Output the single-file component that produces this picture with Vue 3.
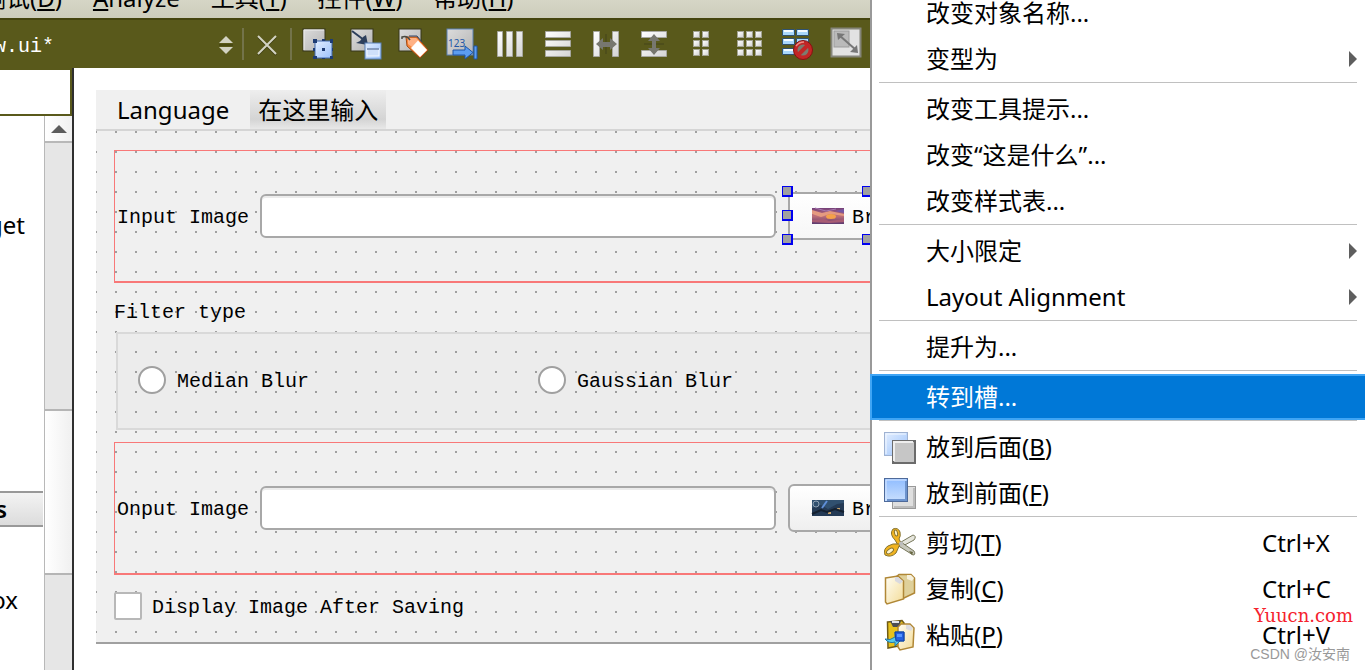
<script setup>
import { ref } from 'vue'

const menus = [
  { pre: '测试(', key: 'D', post: ')' },
  { pre: '', key: 'A', post: 'nalyze' },
  { pre: '工具(', key: 'T', post: ')' },
  { pre: '控件(', key: 'W', post: ')' },
  { pre: '帮助(', key: 'H', post: ')' },
]

const sections = [
  [{ text: '改变对象名称...' }, { text: '变型为', sub: true }],
  [{ text: '改变工具提示...' }, { text: '改变“这是什么”...' }, { text: '改变样式表...' }],
  [{ text: '大小限定', sub: true }, { text: 'Layout Alignment', sub: true }],
  [{ text: '提升为...' }],
  [{ text: '转到槽...', active: true }],
  [
    { text: '放到后面', key: 'B', icon: 'back' },
    { text: '放到前面', key: 'F', icon: 'front' },
  ],
  [
    { text: '剪切', key: 'T', icon: 'cut', shortcut: 'Ctrl+X' },
    { text: '复制', key: 'C', icon: 'copy', shortcut: 'Ctrl+C' },
    { text: '粘贴', key: 'P', icon: 'paste', shortcut: 'Ctrl+V' },
  ],
]

const grid3 = [3, 12, 21]
const grid2 = [7, 16]

const inputPath = ref('')
const outputPath = ref('')
const blur = ref('')
const showAfter = ref(false)
</script>

<template>
  <div class="designer">
    <svg class="defs" aria-hidden="true">
      <defs>
        <linearGradient id="gGray" x1="0" y1="0" x2="1" y2="1">
          <stop offset="0" stop-color="#dcdcdc" /><stop offset="1" stop-color="#b4b4b4" />
        </linearGradient>
        <linearGradient id="gLight" x1="0" y1="0" x2="1" y2="1">
          <stop offset="0" stop-color="#ffffff" /><stop offset="1" stop-color="#d4d4d4" />
        </linearGradient>
        <linearGradient id="gBlue" x1="0" y1="0" x2="1" y2="1">
          <stop offset="0" stop-color="#e2eeff" /><stop offset="1" stop-color="#9cc2fb" />
        </linearGradient>
        <linearGradient id="gBlue2" x1="0" y1="0" x2="0" y2="1">
          <stop offset="0" stop-color="#8fbcff" /><stop offset="1" stop-color="#c9dffd" />
        </linearGradient>
        <linearGradient id="gPage" x1="0" y1="0" x2="1" y2="1">
          <stop offset="0" stop-color="#fffdf4" /><stop offset="1" stop-color="#f3dc98" />
        </linearGradient>
        <linearGradient id="gDusk" x1="0" y1="0" x2="0" y2="1">
          <stop offset="0" stop-color="#74407a" /><stop offset="0.5" stop-color="#c07078" /><stop offset="1" stop-color="#5c3a70" />
        </linearGradient>
      </defs>
    </svg>

    <nav class="menubar">
      <button v-for="m in menus" :key="m.key" type="button" class="menu-title">{{ m.pre }}<u>{{ m.key }}</u>{{ m.post }}</button>
    </nav>

    <div class="toolbar">
      <div class="file">
        <select aria-label="Open file"><option>window.ui*</option></select>
        <svg class="updown" width="14" height="20" viewBox="0 0 14 20">
          <path d="M0 9H14V11H0Z" fill="#41410f" opacity=".6" /><path d="M7 1 14 8H0Z" fill="#d3d3c3" /><path d="M0 12H14L7 19Z" fill="#d3d3c3" />
        </svg>
      </div>
      <span class="bar"></span>
      <button type="button" class="tool close" aria-label="Close">
        <svg width="20" height="20" viewBox="0 0 20 20"><path d="M1 3 19 21M19 3 1 21" stroke="#3c3c10" stroke-width="2" /><path d="M1 2 19 20M19 2 1 20" stroke="#d3d3c4" stroke-width="2" /></svg>
      </button>
      <span class="bar"></span>
      <div class="tools">
        <button type="button" class="tool" aria-label="Edit widgets">
          <svg viewBox="0 0 32 32">
            <rect x="1" y="1" width="22" height="22" fill="url(#gGray)" stroke="#37371c" /><path d="M2 22V2H22" fill="none" stroke="#eee" />
            <rect x="13" y="13" width="17" height="17" fill="url(#gBlue)" stroke="#3e69b0" />
            <path d="M11 11h4v4h-4zM28 11h3v4h-3zM11 28h4v3h-4zM28 28h3v3h-3zM20 20h3v3h-3z" fill="#1e3c74" /><path d="M20 11h3v2h-3zM11 20h2v3h-2zM30 20h1v3h-1zM20 30h3v1h-3z" fill="#1e3c74" />
          </svg>
        </button>
        <button type="button" class="tool" aria-label="Edit signals and slots">
          <svg viewBox="0 0 32 32">
            <rect x="1" y="1" width="22" height="22" fill="url(#gGray)" stroke="#37371c" />
            <path d="M2 3 14 12" stroke="#2d3f5c" stroke-width="2" /><path d="M16 7 18 17 6 15 10 13 13 9Z" fill="#2d3f5c" />
            <rect x="15" y="15" width="16" height="16" fill="url(#gBlue)" stroke="#5a82ba" /><rect x="17" y="21" width="12" height="7" fill="#cfe0fb" stroke="#f5f9ff" /><path d="M17 21H29" stroke="#2e4c7f" />
          </svg>
        </button>
        <button type="button" class="tool" aria-label="Edit buddies">
          <svg viewBox="0 0 32 32">
            <rect x="1" y="1" width="22" height="22" fill="url(#gGray)" stroke="#37371c" />
            <path d="M8 9H19L30 22 22 30 9 18Z" fill="#f9873a" stroke="#a44a16" /><path d="M10 10H18L21 13 14 19 10 16Z" fill="#ffb184" />
            <path d="M20 12.500 29 22 22 29 13 20Z" fill="#fff" /><path d="M4 11V9Q9 7 12 12" fill="none" stroke="#4a4a42" stroke-width="1.5" /><path d="M11 8H19L24 14" fill="none" stroke="#33476a" />
          </svg>
        </button>
        <button type="button" class="tool" aria-label="Edit tab order">
          <svg viewBox="0 0 32 32">
            <rect x="1" y="1" width="26" height="26" fill="url(#gGray)" stroke="#5a80b4" />
            <text x="2" y="19" class="digits">123</text>
            <path d="M7 22H19V18L27 24.500 19 31V27H7Z" fill="#5c9df0" stroke="#1f55a5" /><path d="M28 18h3v13h-3z" fill="#5c9df0" stroke="#1f55a5" />
          </svg>
        </button>
        <button type="button" class="tool" aria-label="Lay out horizontally">
          <svg viewBox="0 0 32 32"><g fill="url(#gLight)" stroke="#a7a7a0"><path d="M3.500 3.500h5v25h-5zM12.500 3.500h6v25h-6zM22.500 3.500h6v25h-6z" /></g></svg>
        </button>
        <button type="button" class="tool" aria-label="Lay out vertically">
          <svg viewBox="0 0 32 32"><g fill="url(#gLight)" stroke="#a7a7a0"><path d="M3.500 3.500h25v6h-25zM3.500 12.500h25v6h-25zM3.500 22.500h25v6h-25z" /></g></svg>
        </button>
        <button type="button" class="tool" aria-label="Horizontal splitter">
          <svg viewBox="0 0 32 32"><g fill="url(#gLight)" stroke="#a7a7a0"><path d="M3.500 3.500h6v25h-6zM22.500 3.500h6v25h-6z" /></g><path d="M16 6V26" stroke="#45451a" /><path d="M6 16 13 10V14H20V10L27 16 20 22V19H13V22Z" fill="#77776f" /></svg>
        </button>
        <button type="button" class="tool" aria-label="Vertical splitter">
          <svg viewBox="0 0 32 32"><g fill="url(#gLight)" stroke="#a7a7a0"><path d="M3.500 3.500h25v6h-25zM3.500 22.500h25v6h-25z" /></g><path d="M6 16H26" stroke="#45451a" /><path d="M16 6 22 13H18V20H22L16 27 10 20H14V13H10Z" fill="#77776f" /></svg>
        </button>
        <button type="button" class="tool" aria-label="Form layout">
          <svg viewBox="0 0 32 32">
            <template v-for="y in grid3" :key="y"><g v-for="x in grid2" :key="x"><rect :x="x" :y="y" width="7" height="7" fill="#a3a393" /><rect :x="x + 1" :y="y + 1" width="5" height="5" fill="url(#gLight)" /></g></template>
          </svg>
        </button>
        <button type="button" class="tool" aria-label="Grid layout">
          <svg viewBox="0 0 32 32">
            <template v-for="y in grid3" :key="y"><g v-for="x in grid3" :key="x"><rect :x="x" :y="y" width="7" height="7" fill="#a3a393" /><rect :x="x + 1" :y="y + 1" width="5" height="5" fill="url(#gLight)" /></g></template>
          </svg>
        </button>
        <button type="button" class="tool" aria-label="Break layout">
          <svg viewBox="0 0 32 32">
            <g fill="#a9d8fb" stroke="#2f5270"><path d="M.5 1.500h12v6H.5zM14.500 1.500h12v6h-12zM.5 10.500h12v6H.5zM14.500 10.500h12v6h-12zM.5 20.500h12v6H.5z" /></g>
            <path d="M2 3h9M16 3h9M2 12h9M2 22h9" stroke="#f4fbff" stroke-width="2" />
            <circle cx="21" cy="22" r="7.500" fill="#7c7c70" stroke="#c22626" stroke-width="4" /><circle cx="21" cy="22" r="9.500" fill="none" stroke="#861111" />
            <path d="M16 27 26 17" stroke="#c22626" stroke-width="4" /><path d="M14 18Q17 14 22 14" fill="none" stroke="#ee8c83" stroke-width="1.500" />
          </svg>
        </button>
        <button type="button" class="tool" aria-label="Adjust size">
          <svg viewBox="0 0 32 32">
            <rect x="1.500" y=".5" width="29" height="28" fill="#e2e2e2" stroke="#85857a" stroke-width="2" /><rect x="4" y="3" width="15" height="16" fill="#bababa" stroke="#9c9c9c" />
            <path d="M9 7 26 22" stroke="#777" stroke-width="2" /><path d="M7 5 15 6 8 12ZM28 25 20 24 27 17Z" fill="#777" />
          </svg>
        </button>
      </div>
    </div>

    <div class="workspace">
      <aside class="sidebar">
        <input class="filter" type="text" aria-label="Filter" />
        <div class="box">
          <div class="list">
            <div class="entry first">get</div>
            <div class="heading">s</div>
            <div class="entry">ox</div>
          </div>
          <div class="scroll">
            <button type="button" class="scroll-up" aria-label="Scroll up"><svg width="16" height="8" viewBox="0 0 16 8"><path d="M8 0 16 8H0Z" fill="#5c5c5c" /></svg></button>
            <div class="track"><div class="thumb"></div></div>
          </div>
        </div>
      </aside>

      <main class="canvas">
        <form class="form" @submit.prevent>
          <div class="form-menu">
            <button type="button">Language</button>
            <button type="button" class="placeholder">在这里输入</button>
          </div>
          <div class="form-body">
            <div class="row">
              <label for="in">Input Image</label>
              <input id="in" v-model="inputPath" type="text" />
              <div class="selected">
                <button type="button" class="browse square">
                  <svg width="32" height="16" viewBox="0 0 32 16">
                    <rect width="32" height="16" fill="url(#gDusk)" /><path d="M0 2 10 5 18 3 32 6V8L18 6 9 9 0 6Z" fill="#e49a80" /><path d="M3 0 14 3 24 1" fill="none" stroke="#a77ab2" /><ellipse cx="19" cy="8.500" rx="5" ry="2.500" fill="#f4a14a" /><path d="M0 12 12 11 17 13 32 11V14L17 15 0 14Z" fill="#a85c74" /><path d="M23 3 32 1V5Z" fill="#7656a3" />
                  </svg>
                  <span>Browse</span>
                </button>
                <i class="h tl"></i><i class="h tc"></i><i class="h tr"></i><i class="h ml"></i><i class="h mr"></i><i class="h bl"></i><i class="h bc"></i><i class="h br"></i>
              </div>
            </div>

            <fieldset>
              <legend>Filter type</legend>
              <div class="group">
                <label><input v-model="blur" type="radio" name="blur" value="median" /><span>Median Blur</span></label>
                <label><input v-model="blur" type="radio" name="blur" value="gaussian" /><span>Gaussian Blur</span></label>
              </div>
            </fieldset>

            <div class="row">
              <label for="out">Onput Image</label>
              <input id="out" v-model="outputPath" type="text" />
              <button type="button" class="browse">
                <svg width="32" height="16" viewBox="0 0 32 16">
                  <rect width="32" height="16" fill="#243a55" /><path d="M0 8 9 5 16 9 25 4 32 3V0H0Z" fill="#31506f" /><circle cx="4" cy="4" r="3" fill="none" stroke="#8fa1b4" /><path d="M10 8 15 1" stroke="#5f8fd8" stroke-width="2" /><path d="M16 12h3v2h-3zM25 8h3v2h-3z" fill="#c9a36b" /><path d="M0 14 9 10 15 12 23 9 32 12" fill="none" stroke="#14202f" stroke-width="2" />
                </svg>
                <span>Browse</span>
              </button>
            </div>

            <label class="check"><input v-model="showAfter" type="checkbox" /><span>Display Image After Saving</span></label>
          </div>
        </form>
      </main>
    </div>

    <ul class="context" role="menu">
      <template v-for="(section, i) in sections" :key="i">
        <li v-if="i" class="rule" role="separator"></li>
        <li v-for="item in section" :key="item.text" role="none">
          <button type="button" role="menuitem" class="item" :class="{ active: item.active }">
            <span class="icon">
              <svg v-if="item.icon === 'back'" viewBox="0 0 32 32">
                <rect x=".5" y="1.500" width="23" height="23" fill="url(#gBlue)" stroke="#9fb2d2" /><path d="M2 23V3H22" fill="none" stroke="#f3f8ff" />
                <rect x="9" y="10" width="22" height="22" fill="#c6c6c6" stroke="#6b6b6b" stroke-width="2" /><path d="M10 30V11H29" fill="none" stroke="#eee" stroke-width="2" />
              </svg>
              <svg v-else-if="item.icon === 'front'" viewBox="0 0 32 32">
                <rect x="8.500" y="9.500" width="23" height="22" fill="#dfdfdf" stroke="#999" /><path d="M30 11V30H10" fill="none" stroke="#bcbcbc" stroke-width="2" />
                <rect x=".5" y="1.500" width="23" height="23" fill="url(#gBlue2)" stroke="#4e6a9a" /><path d="M2 23V3H22" fill="none" stroke="#d8e8ff" /><path d="M22 4V23H3" fill="none" stroke="#6c93cd" stroke-width="2" />
              </svg>
              <svg v-else-if="item.icon === 'cut'" viewBox="0 0 32 32">
                <path d="M12 18 29 8Q33 9 30 13L17 20Z" fill="#e5e5dc" stroke="#77775a" /><path d="M14 13 30 24Q32 28 29 28L13 18Z" fill="#c7c7bb" stroke="#77775a" />
                <path d="M29 25 25 24 28 28Z" fill="#65653e" />
                <path d="M9 2Q14 0 16 5 17 9 15 12L17 16 14 18 11 13Q5 7 9 2Z" fill="#f1b31f" stroke="#857330" /><ellipse cx="12" cy="6" rx="1.500" ry="3" transform="rotate(-15 12 6)" fill="#fff3ca" stroke="#857330" />
                <path d="M16 17 12 26Q7 31 1 28-1 22 4 19 8 16 16 17Z" fill="#f1b31f" stroke="#857330" /><ellipse cx="6" cy="24" rx="4" ry="2" transform="rotate(-35 6 24)" fill="#fff3ca" stroke="#857330" /><circle cx="17" cy="16.500" r="2" fill="#bcbcbc" />
              </svg>
              <svg v-else-if="item.icon === 'copy'" viewBox="0 0 32 32">
                <path d="M12 4 15 1.500H27L30.500 5V20L20 25H12Z" fill="#dfd09a" stroke="#b08736" stroke-width="1.500" /><path d="M23 2V6L28 8 30 5 27 2Z" fill="#f6f0dc" />
                <path d="M1.500 5 14 3 19.500 8V26L3 31 1.500 29Z" fill="url(#gPage)" stroke="#b08736" stroke-width="1.500" /><path d="M11 4V8L16 11 19 8 14 4Z" fill="#d9d9df" />
              </svg>
              <svg v-else-if="item.icon === 'paste'" viewBox="0 0 32 32">
                <path d="M3.500 3 18 1.500 20 4V26L4 29Z" fill="#e8c21c" stroke="#6f5b16" stroke-width="1.500" /><path d="M6 2H17L15 8H9Z" fill="#4d4f52" /><path d="M8 2H15V4H8Z" fill="#e5e7ea" />
                <path d="M14 8 17 5H26L30 9 29 28 16 31 14 28Z" fill="url(#gPage)" stroke="#b08736" stroke-width="1.500" /><path d="M22 6V10L27 12 29 9 26 6Z" fill="#dcdce0" />
                <path d="M11 13H20V22H16L11 27V23Q5 25 1 20 6 22 11 18Z" fill="#55c9ec" stroke="#2079ab" /><path d="M11 13H20V22H12Z" fill="#2361e0" stroke="#153e9d" /><path d="M13 15h5v3h-5z" fill="#5796ff" />
              </svg>
            </span>
            <span class="text">{{ item.text }}<template v-if="item.key">(<u>{{ item.key }}</u>)</template></span>
            <span v-if="item.shortcut" class="shortcut">{{ item.shortcut }}</span>
            <svg v-if="item.sub" class="arrow" width="8" height="16" viewBox="0 0 8 16"><path d="M0 0 8 8 0 16Z" fill="#5e5e5e" /></svg>
          </button>
        </li>
      </template>
    </ul>

    <div class="marks">
      <span class="site">Yuucn.com</span>
      <span class="author">CSDN @汝安南</span>
    </div>
  </div>
</template>

<style>
body { overflow: hidden; }
</style>

<style scoped>
.designer {
  position: relative;
  display: flex;
  flex-direction: column;
  height: 100vh;
  overflow: hidden;
  background: #fff;
  color: #000;
  font: 24px/32px "Noto Sans", "Noto Sans CJK SC", sans-serif;
}
* { box-sizing: border-box; }
button, input, select { font: inherit; color: inherit; margin: 0; }
button { padding: 0; border: 0; background: none; white-space: nowrap; }
u { text-decoration-thickness: 2px; text-underline-offset: 2px; }
.defs { position: absolute; width: 0; height: 0; }
svg { display: block; overflow: visible; flex: none; }

.menubar {
  display: flex;
  flex: none;
  align-items: flex-end;
  gap: 31px;
  height: 20px;
  padding-bottom: 4px;
  margin-left: -18px;
  background: linear-gradient(#d6d6c6, #cdcdbb);
  border-bottom: 2px solid #45450f;
  overflow: hidden;
}

.toolbar { display: flex; flex: none; align-items: center; height: 48px; background: #59591b; }
.file { position: relative; flex: none; width: 308px; height: 32px; margin-left: -66px; }
.file select {
  appearance: none;
  display: block;
  width: 100%;
  height: 36px;
  padding: 2px 0 0;
  border: 0;
  background: none;
  color: #fff;
  font: 20px/32px "Liberation Mono", monospace;
}
.updown { position: absolute; right: 9px; top: 7px; pointer-events: none; }
.bar { flex: none; width: 2px; height: 32px; background: #73734a; }
.tool { display: flex; flex: none; align-items: center; justify-content: center; width: 32px; height: 32px; }
.tool.close { width: 46px; }
.tools { display: flex; gap: 16px; margin-left: 10px; }
.tools svg { width: 32px; height: 32px; }
.digits { font: 10px "Noto Sans", sans-serif; fill: #2458a6; }

.workspace { display: flex; flex: 1; min-height: 0; }
.sidebar { display: flex; flex: none; flex-direction: column; width: 74px; border-right: 2px solid #2f2f2f; }
.filter { width: 100%; height: 48px; padding: 0; background: #fff; border: 2px solid #59591b; border-left: 0; border-radius: 0; outline: 0; }
.box { display: flex; flex: 1; min-height: 0; }
.list { flex: 1; overflow: hidden; }
.entry, .heading { display: flex; justify-content: flex-end; }
.entry { padding-right: 26px; }
.entry.first { margin-top: 93px; padding-right: 19px; }
.heading {
  margin: 250px 1px 57px 0;
  padding-right: 36px;
  font-weight: 600;
  background: linear-gradient(#f3f3f3, #dcdcdc);
  border-top: 2px solid #999;
  border-bottom: 2px solid #999;
}
.scroll { display: flex; flex: none; flex-direction: column; width: 28px; border-left: 1px solid #b8b8b8; }
.scroll-up { display: flex; align-items: center; justify-content: center; flex: none; height: 27px; background: linear-gradient(90deg, #fff, #f0f0f0); border-bottom: 2px solid #b8b8b8; }
.track { flex: 1; padding-top: 266px; background: #e6e6e6; }
.thumb { height: 166px; background: linear-gradient(90deg, #fff, #f0f0f0); border-top: 2px solid #b5b5b5; border-bottom: 2px solid #b5b5b5; }

.canvas { flex: 1; min-width: 0; padding: 22px 399px 0 22px; }
.form { background: #f0f0f0; border-bottom: 2px solid #a0a0a0; }
.form-menu { display: flex; height: 41px; padding-left: 21px; gap: 21px; border-bottom: 2px solid #d5d5d5; }
.form-menu .placeholder { padding: 0 8px; background: linear-gradient(#eee, #d4d4d4 75%, #e8e8e8); }
.form-body {
  padding: 19px 19px 20px 18px;
  background: conic-gradient(from 90deg at 18px 18px, #a0a0a0 90deg, transparent 0) 1px 2px / 20px 20px;
  font: 20px/32px "Liberation Mono", monospace;
}
.row { display: flex; align-items: center; height: 133px; border: 1px solid #f87878; border-bottom-width: 2px; }
.row > label { flex: none; width: 145px; padding: 4px 0 0 2px; }
.row > input { flex: 1; min-width: 0; height: 44px; padding: 0 8px; background: #fff; border: 2px solid #a8a8a8; border-radius: 6px; box-shadow: inset 0 2px #ececec; outline: 0; }
.browse {
  display: flex;
  flex: none;
  align-items: center;
  gap: 8px;
  width: 158px;
  height: 48px;
  padding-left: 22px;
  margin-left: 12px;
  background: linear-gradient(#fff, #efefef);
  border: 2px solid #a8a8a8;
  border-radius: 6px;
}
.browse span, .group span, .check span { padding-top: 4px; }
.selected { position: relative; flex: none; margin-left: 12px; }
.selected .browse { margin-left: 0; }
.browse.square { border-radius: 0; background: linear-gradient(#fff, #f6f6f6); }
.h { position: absolute; width: 11px; height: 11px; background: #a0a0a0; border: 1px solid #0000f0; border-width: 1px 2px 2px 1px; }
.tl, .ml, .bl { left: -6px; }
.tc, .bc { left: 74px; }
.tr, .mr, .br { right: -6px; }
.tl, .tc, .tr { top: -6px; }
.ml, .mr { top: 18px; }
.bl, .bc, .br { bottom: -5px; }

fieldset { min-width: 0; margin: 0; padding: 0; border: 0; }
legend { padding: 14px 0 3px; }
.group { display: grid; grid-template-columns: 400px 1fr; align-items: center; height: 98px; margin: 0 0 12px 2px; padding: 0 0 2px 20px; background: rgba(0, 0, 0, 0.016); border: 2px solid #d9d9d9; }
.group label, .check { display: flex; align-items: center; gap: 11px; height: 32px; }
.group input, .check input { appearance: none; flex: none; width: 28px; height: 28px; background: #fff; border: 2px solid #a0a0a0; }
.group input { border-radius: 50%; }
.check { margin-top: 15px; gap: 10px; }
.check input { border-color: #b8b8b8; border-radius: 2px; }

.context { position: absolute; top: -10px; right: 0; bottom: 0; width: 495px; margin: 0; padding: 0; list-style: none; background: #fff; border-left: 2px solid #999; }
.rule { height: 4px; margin: 0 8px 0 7px; border-top: 1px solid #c0c0c0; }
.item { display: flex; align-items: center; width: 100%; height: 46px; padding: 0 8px 0 12px; text-align: left; }
.item.active { width: auto; min-width: calc(100% + 4px); margin: 0 -2px; padding-left: 12px; color: #fff; background: #0078d7; border: 2px solid #3fa5f5; }
.icon { flex: none; width: 32px; height: 32px; margin-right: 10px; }
.text { flex: 1; }
.shortcut { width: 95px; }

.marks { position: absolute; right: 12px; bottom: 4px; display: flex; flex-direction: column; align-items: flex-end; gap: 12px; }
.site { font: 18px/28px "DejaVu Serif", serif; color: #f5222d; }
.author { padding-right: 3px; font: 14px/24px "Liberation Sans", "Noto Sans CJK SC", sans-serif; color: #999; }
</style>
